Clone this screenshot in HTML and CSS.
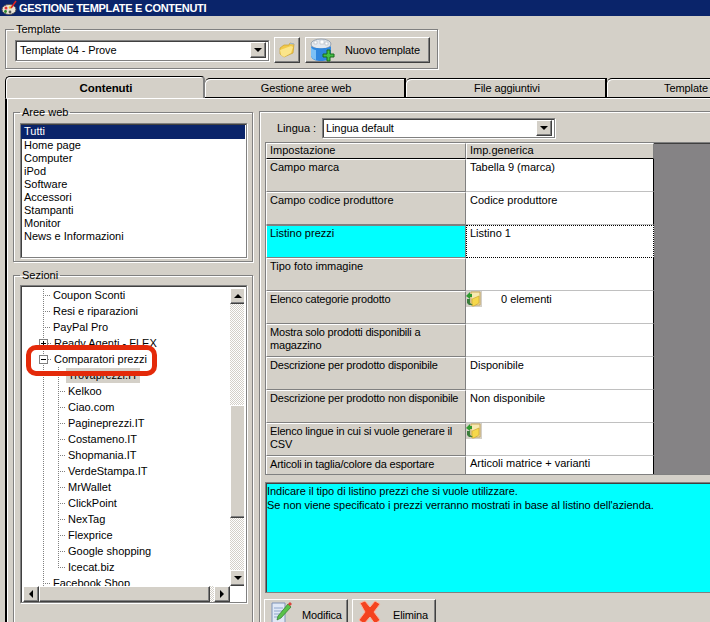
FILE: index.html
```html
<!DOCTYPE html>
<html lang="it">
<head>
<meta charset="utf-8">
<title>Gestione template e contenuti</title>
<link rel="stylesheet" href="styles.css">
</head>
<body>
<div class="window">
  <header class="titlebar">
    <svg class="app-icon" width="16" height="16" viewBox="0 0 16 16"><ellipse cx="8" cy="9.500" rx="7" ry="5" fill="#e8e4d8" stroke="#555"/><circle cx="5" cy="8" r="1.500" fill="#d33"/><circle cx="9" cy="7.500" r="1.300" fill="#e8c020"/><circle cx="4.500" cy="11.500" r="1.400" fill="#2a8a2a"/><circle cx="9" cy="12" r="1.400" fill="#555"/><path d="M10 8 15 1" stroke="#d22" stroke-width="1.600"/></svg>
    <span>GESTIONE TEMPLATE E CONTENUTI</span>
  </header>

  <fieldset class="group template-group">
    <legend>Template</legend>
    <div class="template-row">
      <div class="combo template-combo"><span class="combo-text">Template 04 - Prove</span><span class="btn-arrow"><i class="tri-down"></i></span></div>
      <button class="btn folder-btn" type="button">
        <svg width="16" height="16" viewBox="0 0 16 16"><path d="M1 6 5 3h5l1-2 4 1-1 9-9 4-4-3z" fill="#f2c94a" stroke="#c9a030" stroke-width=".7"/><path d="M1 8 12 4l2 1-2 6-7 4-3-2z" fill="#fbe58a"/><path d="M11 1.500 15 2" stroke="#8fb4e8"/></svg>
      </button>
      <button class="btn new-btn" type="button">
        <svg width="26" height="25" viewBox="0 0 26 25"><ellipse cx="11" cy="6" rx="10" ry="5" fill="#e4e8ee" stroke="#9aa4b0"/><path d="M4 3h3v3H4zM10 2h4v4h-4zM15 4h3v3h-3z" fill="#fff" stroke="#aeb6c0" stroke-width=".6"/><path d="M1 8c2 3 18 3 20 0v10c-1 4-5 5-10 5S2 22 1 18z" fill="#2f86de"/><path d="M1 9c1 2 3 3 5 3v10c-3-1-4-2-5-4z" fill="#7cc0f6"/><path d="M17 12h3v4h4v3h-4v4h-3v-4h-4v-3h4z" fill="#43c043" stroke="#1a6a1a"/></svg>
        <span>Nuovo template</span>
      </button>
    </div>
  </fieldset>

  <nav class="tabs">
    <div class="tab active">Contenuti</div>
    <div class="tab">Gestione aree web</div>
    <div class="tab">File aggiuntivi</div>
    <div class="tab last">Template</div>
  </nav>

  <main class="tab-panel">
    <div class="left-col">
      <fieldset class="group areas-group">
        <legend>Aree web</legend>
        <ul class="list">
          <li class="selected">Tutti</li>
          <li>Home page</li>
          <li>Computer</li>
          <li>iPod</li>
          <li>Software</li>
          <li>Accessori</li>
          <li>Stampanti</li>
          <li>Monitor</li>
          <li>News e Informazioni</li>
        </ul>
      </fieldset>

      <fieldset class="group sections-group">
        <legend>Sezioni</legend>
        <div class="tree-box">
          <div class="tree-top">
            <div class="tree">
              <div class="row l1"><i class="dash"></i><span>Coupon Sconti</span></div>
              <div class="row l1"><i class="dash"></i><span>Resi e riparazioni</span></div>
              <div class="row l1"><i class="dash"></i><span>PayPal Pro</span></div>
              <div class="row l1 parent"><i class="exp plus"></i><i class="dash short"></i><span>Ready Agenti - FLEX</span></div>
              <div class="row l1 parent"><i class="exp"></i><i class="dash short"></i><span>Comparatori prezzi</span></div>
              <div class="row l2"><i class="dash"></i><span class="current">Trovaprezzi.IT</span></div>
              <div class="row l2"><i class="dash"></i><span>Kelkoo</span></div>
              <div class="row l2"><i class="dash"></i><span>Ciao.com</span></div>
              <div class="row l2"><i class="dash"></i><span>Pagineprezzi.IT</span></div>
              <div class="row l2"><i class="dash"></i><span>Costameno.IT</span></div>
              <div class="row l2"><i class="dash"></i><span>Shopmania.IT</span></div>
              <div class="row l2"><i class="dash"></i><span>VerdeStampa.IT</span></div>
              <div class="row l2"><i class="dash"></i><span>MrWallet</span></div>
              <div class="row l2"><i class="dash"></i><span>ClickPoint</span></div>
              <div class="row l2"><i class="dash"></i><span>NexTag</span></div>
              <div class="row l2"><i class="dash"></i><span>Flexprice</span></div>
              <div class="row l2"><i class="dash"></i><span>Google shopping</span></div>
              <div class="row l2 end"><i class="dash"></i><span>Icecat.biz</span></div>
              <div class="row l1"><i class="dash"></i><span>Facebook Shop</span></div>
              <div class="highlight"></div>
            </div>
            <div class="vscroll">
              <span class="sb-btn"><i class="tri-up"></i></span>
              <span class="v-track-a"></span>
              <span class="sb-thumb v-thumb"></span>
              <span class="v-track-b"></span>
              <span class="sb-btn"><i class="tri-down"></i></span>
            </div>
          </div>
          <div class="hscroll">
            <span class="sb-btn"><i class="tri-left"></i></span>
            <span class="sb-thumb h-thumb"></span>
            <span class="h-track"></span>
            <span class="sb-btn"><i class="tri-right"></i></span>
          </div>
        </div>
      </fieldset>
    </div>

    <section class="right-col">
      <div class="lang-row">
        <label class="lang-label">Lingua :</label>
        <div class="combo lang-combo"><span class="combo-text">Lingua default</span><span class="btn-arrow"><i class="tri-down"></i></span></div>
      </div>

      <div class="grid-box">
        <div class="grid">
          <div class="hcell">Impostazione</div><div class="hcell">Imp.generica</div>
          <div class="key">Campo marca</div><div class="val">Tabella 9 (marca)</div>
          <div class="key">Campo codice produttore</div><div class="val">Codice produttore</div>
          <div class="key on">Listino prezzi</div><div class="val focus">Listino 1</div>
          <div class="key">Tipo foto immagine</div><div class="val"></div>
          <div class="key tight">Elenco categorie prodotto</div>
          <div class="val val-icon">
            <svg class="cell-icon" width="16" height="16" viewBox="0 0 16 16"><use href="#list-folder"/></svg><span>0 elementi</span>
          </div>
          <div class="key tight">Mostra solo prodotti disponibili a magazzino</div><div class="val"></div>
          <div class="key tight">Descrizione per prodotto disponibile</div><div class="val">Disponibile</div>
          <div class="key tight">Descrizione per prodotto non disponibile</div><div class="val">Non disponibile</div>
          <div class="key tight">Elenco lingue in cui si vuole generare il CSV</div>
          <div class="val val-icon"><svg class="cell-icon" width="16" height="16" viewBox="0 0 16 16"><use href="#list-folder"/></svg></div>
          <div class="key short tight">Articoli in taglia/colore da esportare</div><div class="val short">Articoli matrice + varianti</div>
        </div>
      </div>

      <div class="help">
        <p>Indicare il tipo di listino prezzi che si vuole utilizzare.</p>
        <p>Se non viene specificato i prezzi verranno mostrati in base al listino dell'azienda.</p>
      </div>

      <div class="actions">
        <button class="btn action edit" type="button">
          <svg width="22" height="24" viewBox="0 0 22 24"><path d="M2 3h13v20H2z" fill="#dfe8f6" stroke="#7f93b8"/><path d="M4 8h9M4 11h9M4 14h6M4 17h6" stroke="#8ea6cc"/><path d="M8 16 18 4l3 3-10 11-4 2z" fill="#58c24a" stroke="#2f7a2a" stroke-width=".7"/><path d="M18 4l2-2 2 2-2 2z" fill="#d8453a"/></svg>
          <span>Modifica</span>
        </button>
        <button class="btn action delete" type="button">
          <svg width="24" height="24" viewBox="0 0 24 24"><path d="M2 3 7 1l5 6 5-6 5 3-6 8 6 8-5 4-5-7-6 7-5-4 6-8z" fill="#f4431f" stroke="#ffb09a"/></svg>
          <span>Elimina</span>
        </button>
      </div>
    </section>
  </main>

  <svg class="defs" width="0" height="0"><defs>
    <g id="list-folder"><rect width="16" height="16" fill="#d4d0c8"/><path d="M5 1h9v13H5z" fill="#f7e9b0" stroke="#c9a85a"/><path d="M6 8l7-3v7l-5 3H6z" fill="#f6d84a" stroke="#c8a030" stroke-width=".6"/><path d="M0 5 4 1v2h2v3H4v2z" fill="#2f9a2f"/><path d="M1 8h3v4l3 2H3l-2-2z" fill="#3b7d3b"/></g>
  </defs></svg>
</div>
</body>
</html>
```
FILE: styles.css
```css
* { box-sizing: border-box; }
html, body { margin: 0; height: 100%; overflow: hidden; }
body { background: #d4d0c8; color: #000; font: 11px/13px "Liberation Sans", Arial, sans-serif; }
.window { height: 622px; overflow: hidden; }
.defs { display: block; height: 0; }

.titlebar { height: 16px; background: #0a246a; color: #fff; font-weight: 700; font-size: 11px; letter-spacing: -.3px; line-height: 15px; display: flex; align-items: center; gap: 2px; padding-left: 1px; white-space: nowrap; }
.app-icon { flex: none; }

.group { margin: 0; padding: 0; min-width: 0; border: 1px solid #808080; box-shadow: inset 1px 1px #fff, 1px 1px #fff; }
.group legend { margin-left: 8px; padding: 0 2px; font-size: 11px; line-height: 13px; }

.template-group { width: 433px; height: 46px; margin: 7px 0 0 5px; }
.template-row { display: flex; align-items: center; padding: 1px 0 0 9px; }

.combo { display: flex; align-items: center; background: #fff; border: 1px solid #808080; box-shadow: inset 1px 1px #404040, 1px 1px #fff; padding: 2px; }
.combo-text { flex: 1; padding-left: 2px; white-space: nowrap; letter-spacing: -.1px; }
.btn-arrow { width: 16px; height: 16px; flex: none; display: flex; align-items: center; justify-content: center; background: #d4d0c8; border: 1px solid; border-color: #fff #404040 #404040 #fff; box-shadow: inset -1px -1px #808080; }
.template-combo { width: 254px; height: 21px; margin-right: 5px; }
.lang-combo { width: 233px; height: 20px; }
.lang-combo .combo-text { padding-left: 1px; }

.tri-down, .tri-up, .tri-left, .tri-right { display: block; width: 0; height: 0; border-style: solid; border-color: transparent; }
.tri-down { border-width: 4px 4px 0; border-top-color: #000; }
.tri-up { border-width: 0 4px 4px; border-bottom-color: #000; }
.tri-left { border-width: 4px 4px 4px 0; border-right-color: #000; }
.tri-right { border-width: 4px 0 4px 4px; border-left-color: #000; }

.btn { display: flex; align-items: center; margin: 0; padding: 0; background: #d4d0c8; color: #000; font: inherit; letter-spacing: -.15px; border: 1px solid; border-color: #fff #404040 #404040 #fff; box-shadow: inset -1px -1px #808080; white-space: nowrap; }
.folder-btn { width: 26px; height: 26px; justify-content: center; margin-right: 5px; }
.new-btn { width: 125px; height: 26px; padding-left: 4px; gap: 9px; }

.tabs { display: flex; height: 21px; margin: 8px 0 0 5px; align-items: flex-end; letter-spacing: -.1px; }
.tab { width: 201px; height: 20px; flex: none; padding-left: 3px; text-align: center; line-height: 18px; border-top: 1px solid #000; border-right: 2px solid #000; border-bottom: 1px solid #000; border-radius: 5px 0 0 0; box-shadow: inset 1px 1px #fff, 0 1px #fff; background: #d4d0c8; }
.tab.active { width: 200px; height: 22px; font-weight: 700; font-size: 11.500px; line-height: 23px; border: 0; border-top: 1px solid #000; border-left: 1px solid #000; border-right: 2px solid #808080; border-radius: 5px 4px 0 0; box-shadow: inset 1px 1px #fff; position: relative; z-index: 1; }
.tab.last { width: 155px; border-right: 0; }

.tab-panel { display: flex; align-items: flex-start; margin-left: 5px; height: 530px; border-left: 2px solid #000; box-shadow: inset 1px 0 #fff; border-top: 1px solid #fff; }

.left-col { width: 252px; flex: none; padding: 0 0 0 6px; }
.areas-group { width: 240px; height: 156px; margin-top: 7px; }
.areas-group legend, .sections-group legend { margin-left: 6px; }
.list { margin: 4px 0 0 6px; padding: 1px 1px 0 0; width: 227px; height: 135px; list-style: none; background: #fff; border: 1px solid #808080; box-shadow: inset 1px 1px #404040, 1px 1px #fff; }
.list li { height: 13px; padding-left: 3px; line-height: 13px; white-space: nowrap; }
.list li.selected { background: #0a246a; color: #fff; height: 14px; }

.sections-group { width: 240px; height: 360px; margin-top: 7px; }
.tree-box { margin: 3px 0 0 6px; width: 227px; height: 318px; padding: 2px; border: 1px solid #808080; background: #fff; box-shadow: inset 1px 1px #404040, 1px 1px #fff; }
.tree-top { display: flex; height: 298px; overflow: hidden; }
.tree { width: 207px; height: 298px; flex: none; overflow: hidden; position: relative; }
.row { display: flex; align-items: center; height: 16px; white-space: nowrap; background: repeating-linear-gradient(#808080 0 1px, transparent 1px 2px) 20px 0 / 1px 100% no-repeat; }
.row:first-child { margin-top: -1px; }
.row.l1 { padding-left: 20px; }
.row.l1.parent { padding-left: 16px; }
.row.l2 { padding-left: 35px; background: repeating-linear-gradient(#808080 0 1px, transparent 1px 2px) 20px 0 / 1px 100% no-repeat, repeating-linear-gradient(#808080 0 1px, transparent 1px 2px) 35px 0 / 1px 100% no-repeat; }
.row.l2.end { background: repeating-linear-gradient(#808080 0 1px, transparent 1px 2px) 20px 0 / 1px 100% no-repeat, repeating-linear-gradient(#808080 0 1px, transparent 1px 2px) 35px 0 / 1px 8px no-repeat; }
.row span { padding: 0 2px; line-height: 15px; }
.row span.current { background: #d4d0c8; }
.dash { width: 8px; height: 1px; flex: none; background: repeating-linear-gradient(90deg, #808080 0 1px, transparent 1px 2px); }
.dash.short { width: 4px; }
.exp { width: 9px; height: 9px; flex: none; border: 1px solid #808080; background: linear-gradient(#000, #000) center / 5px 1px no-repeat, #fff; }
.exp.plus { background: linear-gradient(#000, #000) center / 5px 1px no-repeat, linear-gradient(#000, #000) center / 1px 5px no-repeat, #fff; }
.highlight { position: absolute; left: 3px; top: 57px; width: 131px; height: 31px; border: 5px solid #e42a0a; border-radius: 10px; }

.vscroll { width: 16px; flex: none; display: flex; flex-direction: column; }
.sb-btn { width: 16px; height: 16px; flex: none; display: flex; align-items: center; justify-content: center; background: #d4d0c8; border: 1px solid; border-color: #fff #404040 #404040 #fff; box-shadow: inset -1px -1px #808080; }
.sb-thumb { display: block; background: #d4d0c8; border: 1px solid; border-color: #fff #404040 #404040 #fff; box-shadow: inset -1px -1px #808080; }
.v-track-a, .v-track-b, .h-track { display: block; background: repeating-conic-gradient(#fff 0 25%, #d4d0c8 0 50%) 0 0 / 2px 2px; }
.v-track-a { height: 101px; }
.v-thumb { height: 113px; }
.v-track-b { height: 52px; }
.hscroll { display: flex; height: 16px; }
.h-thumb { width: 171px; }
.h-track { width: 4px; }

.right-col { flex: 1; min-width: 0; margin: 12px 0 0; padding: 0 0 0 5px; border: 1px solid #808080; border-right: 0; border-bottom: 0; box-shadow: inset 1px 1px #fff; height: 600px; }
.lang-row { display: flex; align-items: center; height: 20px; margin-top: 6px; padding-left: 12px; }
.lang-label { width: 45px; }
.grid-box { margin-top: 4px; width: 450px; height: 333px; background: #858385; border: 1px solid #808080; border-right: 0; box-shadow: inset 1px 1px #404040; }
.grid { display: grid; grid-template-columns: 200px 188px; grid-template-rows: 16px repeat(9, 33px) 18px; }
.hcell { padding: 0 3px; border: 1px solid; border-color: #fff #808080 #000 #fff; background: #d4d0c8; white-space: nowrap; }
.key { padding: 1px 3px 0; background: #d4d0c8; border-top: 1px solid #fff; border-right: 1px solid #808080; border-bottom: 1px solid #808080; border-left: 1px solid #fff; }
.key.tight { padding-right: 0; letter-spacing: -.2px; }
.key.on { background: #00ffff; border-top-color: #808080; }
.val { padding: 2px 4px 0; background: #fff; border-right: 1px solid #000; border-bottom: 1px solid #c0c0c0; }
.val.focus { padding: 1px 3px 0; border: 1px dotted #000; }
.val-icon { display: flex; align-items: flex-start; padding: 0; }
.cell-icon { flex: none; }
.val-icon span { margin: 2px 0 0 19px; }
.key.short, .val.short { padding-top: 1px; border-bottom: 0; }

.help { margin-top: 7px; width: 450px; height: 111px; padding: 1px; background: #00ffff; border: 1px solid #808080; border-right: 0; box-shadow: inset 1px 1px #404040; line-height: 14px; letter-spacing: -.05px; }
.help p { margin: 0; white-space: nowrap; }

.actions { display: flex; gap: 4px; margin: 6px 0 0 -1px; }
.action { width: 84px; height: 30px; padding-left: 5px; align-items: flex-start; gap: 10px; border-bottom: 0; }
.action span { margin-top: 9px; }
.delete { gap: 11px; }
```
